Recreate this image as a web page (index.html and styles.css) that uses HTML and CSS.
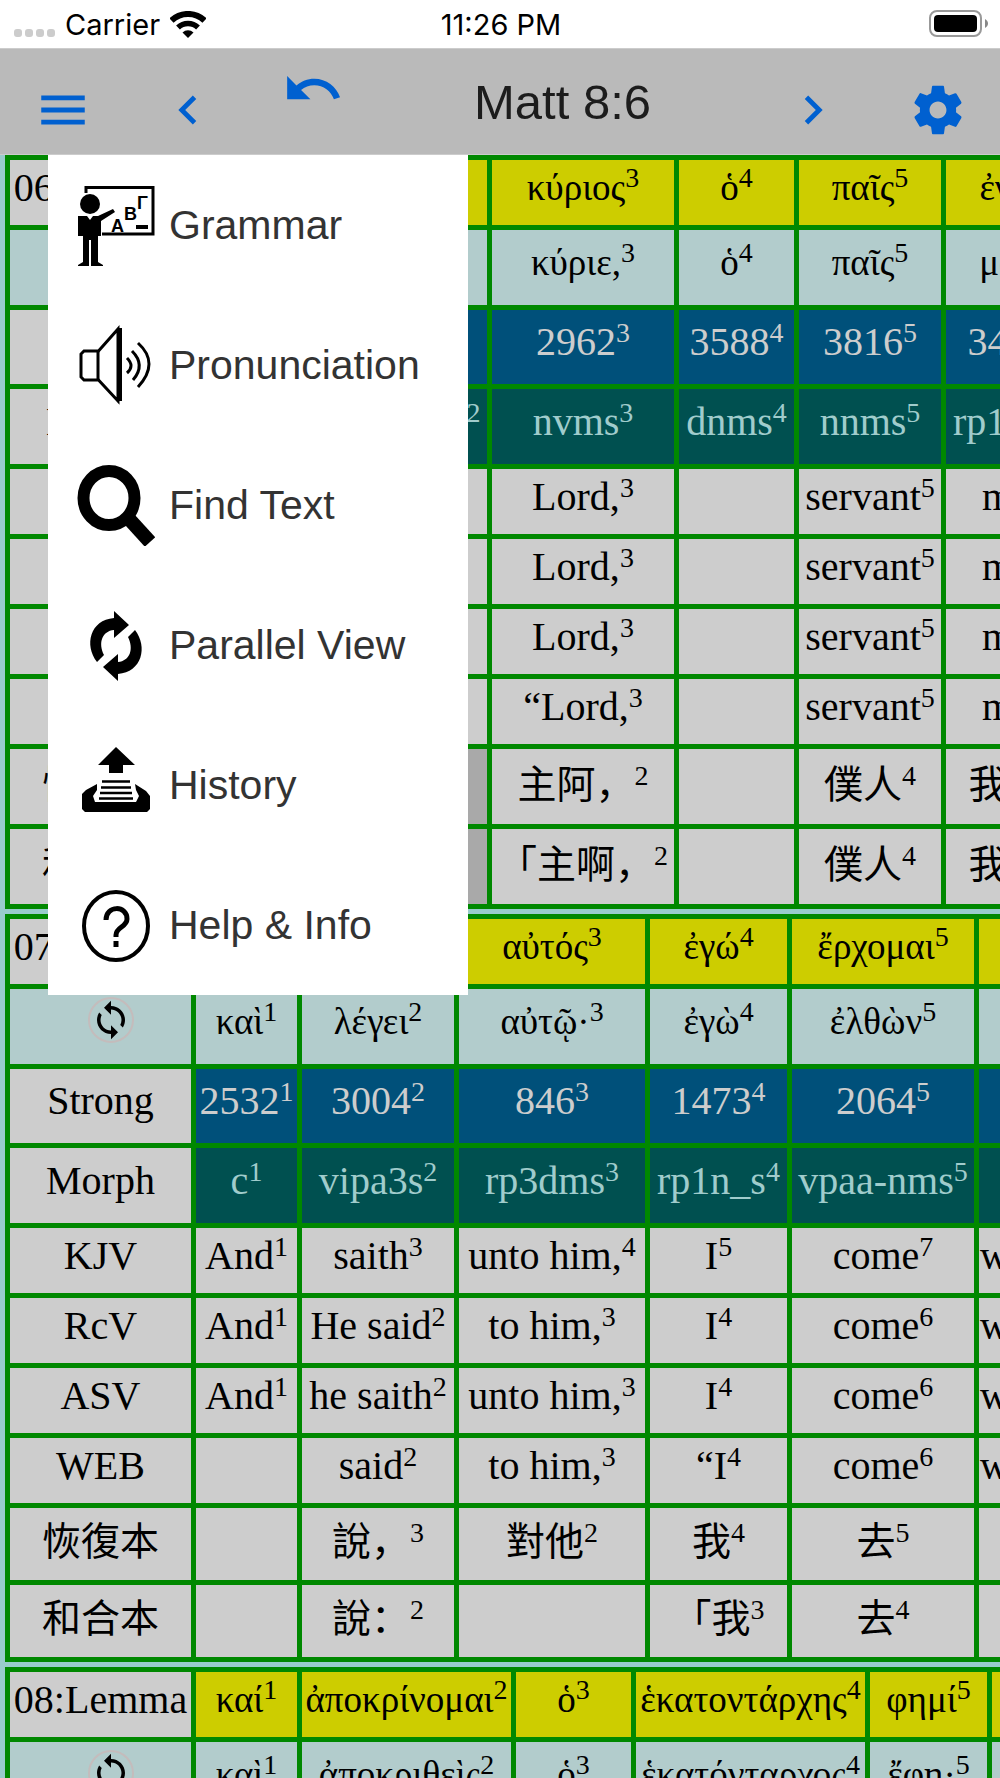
FILE: index.html
```html
<!DOCTYPE html>
<html lang="en">
<head>
    <meta charset="UTF-8">
    <meta name="viewport" content="width=device-width, initial-scale=1.0">
    <title>Matt 8:6</title>
    <link rel="stylesheet" href="styles.css">
</head>
<body>
    <div class="status">
        <div class="carrier">
            <span class="dots"><i></i><i></i><i></i><i></i></span>
            <span>Carrier</span>
            <svg class="wifi" viewBox="0 0 36 27">
                <path d="M1.500 9.500a24 24 0 0 1 33 0" fill="none" stroke="#000" stroke-width="6"/>
                <path d="M8 16.500a14.500 14.500 0 0 1 20 0" fill="none" stroke="#000" stroke-width="5.500"/>
                <path d="M12.500 21.500a8 8 0 0 1 11 0L18 27z"/>
            </svg>
        </div>
        <div class="time">11:26 PM</div>
        <svg class="battery" viewBox="0 0 60 28">
            <rect x="2" y="1" width="51" height="25" rx="7" fill="none" stroke="#999" stroke-width="2"/>
            <rect x="6" y="5" width="43" height="17" rx="4"/>
            <path d="M57 9c4 2 4 7 0 9z" fill="#888"/>
        </svg>
    </div>

    <header class="toolbar">
        <button aria-label="Menu">
            <svg viewBox="0 0 24 24"><path d="M3 18h18v-2H3v2zm0-5h18v-2H3v2zm0-7v2h18V6H3z"/></svg>
        </button>
        <button aria-label="Previous">
            <svg viewBox="0 0 24 24"><path d="M15.41 7.41L14 6l-6 6 6 6 1.41-1.41L10.83 12z"/></svg>
        </button>
        <button class="undo" aria-label="Undo">
            <svg viewBox="0 0 24 24"><path d="M12.5 8c-2.65 0-5.05.99-6.9 2.6L2 7v9h9l-3.62-3.62c1.39-1.16 3.16-1.88 5.12-1.88 3.54 0 6.55 2.31 7.6 5.5l2.37-.78C21.08 11.03 17.15 8 12.5 8z"/></svg>
        </button>
        <h1>Matt 8:6</h1>
        <button aria-label="Next">
            <svg viewBox="0 0 24 24"><path d="M10 6L8.59 7.41 13.17 12l-4.58 4.59L10 18l6-6z"/></svg>
        </button>
        <button aria-label="Settings">
            <svg viewBox="0 0 24 24"><path d="M19.43 12.98c.04-.32.07-.64.07-.98s-.03-.66-.07-.98l2.110-1.65c.19-.15.24-.42.12-.64l-2-3.46c-.12-.22-.39-.3-.61-.22l-2.490 1c-.52-.4-1.080-.73-1.690-.98l-.38-2.650C14.46 2.180 14.250 2 14 2h-4c-.25 0-.46.18-.49.42l-.38 2.650c-.61.25-1.170.59-1.690.98l-2.490-1c-.23-.09-.49 0-.61.22l-2 3.460c-.13.22-.07.49.12.64l2.110 1.650c-.04.32-.07.65-.07.98s.03.66.07.98l-2.110 1.650c-.19.15-.24.42-.12.64l2 3.460c.12.22.39.3.61.22l2.490-1c.52.4 1.080.73 1.690.98l.38 2.650c.03.24.24.42.49.42h4c.25 0 .46-.18.49-.42l.38-2.650c.61-.25 1.170-.59 1.690-.98l2.490 1c.23.09.49 0 .61-.22l2-3.460c.12-.22.07-.49-.12-.64l-2.110-1.650zM12 15.5c-1.930 0-3.500-1.570-3.500-3.500s1.570-3.500 3.500-3.500 3.500 1.570 3.500 3.500-1.570 3.500-3.500 3.500z"/></svg>
        </button>
    </header>

    <main class="content">
        <table class="verse verse-6">
            <colgroup><col><col><col><col><col><col><col></colgroup>
            <tr class="lemma"><th>06:Lemma</th><td>καί<sup>1</sup></td><td>λέγω<sup>2</sup></td><td>κύριος<sup>3</sup></td><td>ὁ<sup>4</sup></td><td>παῖς<sup>5</sup></td><td>ἐγώ<sup>6</sup></td></tr>
            <tr class="greek"><th></th><td>καὶ<sup>1</sup></td><td>λέγων,<sup>2</sup></td><td>κύριε,<sup>3</sup></td><td>ὁ<sup>4</sup></td><td>παῖς<sup>5</sup></td><td>μου<sup>6</sup></td></tr>
            <tr class="strong"><th>Strong</th><td>2532<sup>1</sup></td><td>3004<sup>2</sup></td><td>2962<sup>3</sup></td><td>3588<sup>4</sup></td><td>3816<sup>5</sup></td><td>3450<sup>6</sup></td></tr>
            <tr class="morph"><th>Morph</th><td>c<sup>1</sup></td><td>vppa-nms<sup>2</sup></td><td>nvms<sup>3</sup></td><td>dnms<sup>4</sup></td><td>nnms<sup>5</sup></td><td>rp1g_s<sup>6</sup></td></tr>
            <tr><th>KJV</th><td>And<sup>1</sup></td><td>saying,<sup>2</sup></td><td>Lord,<sup>3</sup></td><td></td><td>servant<sup>5</sup></td><td>my<sup>4</sup></td></tr>
            <tr><th>RcV</th><td>And<sup>1</sup></td><td>saying,<sup>2</sup></td><td>Lord,<sup>3</sup></td><td></td><td>servant<sup>5</sup></td><td>my<sup>4</sup></td></tr>
            <tr><th>ASV</th><td>and<sup>1</sup></td><td>saying,<sup>2</sup></td><td>Lord,<sup>3</sup></td><td></td><td>servant<sup>5</sup></td><td>my<sup>4</sup></td></tr>
            <tr><th>WEB</th><td>and<sup>1</sup></td><td>saying,<sup>2</sup></td><td>“Lord,<sup>3</sup></td><td></td><td>servant<sup>5</sup></td><td>my<sup>4</sup></td></tr>
            <tr class="cjk tall" lang="zh"><th>恢復本</th><td>說，<sup>1</sup></td><td class="none"></td><td>主阿，<sup>2</sup></td><td></td><td>僕人<sup>4</sup></td><td>我的<sup>3</sup></td></tr>
            <tr class="cjk tall" lang="zh"><th>和合本</th><td>說：<sup>1</sup></td><td class="none"></td><td>「主啊，<sup>2</sup></td><td></td><td>僕人<sup>4</sup></td><td>我的<sup>3</sup></td></tr>
        </table>

        <table class="verse verse-7">
            <colgroup><col><col><col><col><col><col><col></colgroup>
            <tr class="lemma"><th>07:Lemma</th><td>καί<sup>1</sup></td><td>λέγω<sup>2</sup></td><td>αὐτός<sup>3</sup></td><td>ἐγώ<sup>4</sup></td><td>ἔρχομαι<sup>5</sup></td><td>θεραπεύω<sup>6</sup></td></tr>
            <tr class="greek">
                <th>
                    <button class="sync" aria-label="Reload verse">
                        <svg viewBox="0 0 24 24"><path d="M12 4V1L8 5l4 4V6c3.310 0 6 2.690 6 6 0 1.010-.25 1.970-.7 2.800l1.460 1.460C19.540 15.030 20 13.570 20 12c0-4.420-3.580-8-8-8zm0 14c-3.310 0-6-2.690-6-6 0-1.010.25-1.970.7-2.800L5.240 7.740C4.460 8.970 4 10.430 4 12c0 4.420 3.580 8 8 8v3l4-4-4-4v3z"/></svg>
                    </button>
                </th>
                <td>καὶ<sup>1</sup></td><td>λέγει<sup>2</sup></td><td>αὐτῷ·<sup>3</sup></td><td>ἐγὼ<sup>4</sup></td><td>ἐλθὼν<sup>5</sup></td><td>θεραπεύσω<sup>6</sup></td>
            </tr>
            <tr class="strong"><th>Strong</th><td>2532<sup>1</sup></td><td>3004<sup>2</sup></td><td>846<sup>3</sup></td><td>1473<sup>4</sup></td><td>2064<sup>5</sup></td><td>2323<sup>6</sup></td></tr>
            <tr class="morph"><th>Morph</th><td>c<sup>1</sup></td><td>vipa3s<sup>2</sup></td><td>rp3dms<sup>3</sup></td><td>rp1n_s<sup>4</sup></td><td>vpaa-nms<sup>5</sup></td><td>vifa1s<sup>6</sup></td></tr>
            <tr><th>KJV</th><td>And<sup>1</sup></td><td>saith<sup>3</sup></td><td>unto him,<sup>4</sup></td><td>I<sup>5</sup></td><td>come<sup>7</sup></td><td>will heal him<sup>6</sup></td></tr>
            <tr><th>RcV</th><td>And<sup>1</sup></td><td>He said<sup>2</sup></td><td>to him,<sup>3</sup></td><td>I<sup>4</sup></td><td>come<sup>6</sup></td><td>will heal him<sup>5</sup></td></tr>
            <tr><th>ASV</th><td>And<sup>1</sup></td><td>he saith<sup>2</sup></td><td>unto him,<sup>3</sup></td><td>I<sup>4</sup></td><td>come<sup>6</sup></td><td>will heal him<sup>5</sup></td></tr>
            <tr><th>WEB</th><td></td><td>said<sup>2</sup></td><td>to him,<sup>3</sup></td><td>“I<sup>4</sup></td><td>come<sup>6</sup></td><td>will heal him<sup>5</sup></td></tr>
            <tr class="cjk" lang="zh"><th>恢復本</th><td></td><td>說，<sup>3</sup></td><td>對他<sup>2</sup></td><td>我<sup>4</sup></td><td>去<sup>5</sup></td><td>醫治<sup>6</sup></td></tr>
            <tr class="cjk" lang="zh"><th>和合本</th><td></td><td>說：<sup>2</sup></td><td></td><td>「我<sup>3</sup></td><td>去<sup>4</sup></td><td>醫治<sup>5</sup></td></tr>
        </table>

        <table class="verse verse-8">
            <colgroup><col><col><col><col><col><col><col></colgroup>
            <tr class="lemma"><th>08:Lemma</th><td>καί<sup>1</sup></td><td>ἀποκρίνομαι<sup>2</sup></td><td>ὁ<sup>3</sup></td><td>ἑκατοντάρχης<sup>4</sup></td><td>φημί<sup>5</sup></td><td></td></tr>
            <tr class="greek">
                <th>
                    <button class="sync" aria-label="Reload verse">
                        <svg viewBox="0 0 24 24"><path d="M12 4V1L8 5l4 4V6c3.310 0 6 2.690 6 6 0 1.010-.25 1.970-.7 2.800l1.460 1.460C19.540 15.030 20 13.570 20 12c0-4.420-3.580-8-8-8zm0 14c-3.310 0-6-2.690-6-6 0-1.010.25-1.970.7-2.800L5.240 7.740C4.460 8.970 4 10.430 4 12c0 4.420 3.580 8 8 8v3l4-4-4-4v3z"/></svg>
                    </button>
                </th>
                <td>καὶ<sup>1</sup></td><td>ἀποκριθεὶς<sup>2</sup></td><td>ὁ<sup>3</sup></td><td>ἑκατόνταρχος<sup>4</sup></td><td>ἔφη·<sup>5</sup></td><td></td>
            </tr>
        </table>

        <nav class="menu">
            <a href="#grammar">
                <svg viewBox="0 0 78 82">
                    <path d="M9 9V3.500h67V50H25" fill="none" stroke="#000" stroke-width="3"/>
                    <circle cx="13" cy="20" r="10"/>
                    <path d="M1 32h9l3 4 3-4h5l15-7 2 3-14 9v15h-3v26l5 3v1H14V56h-2v26H1v-1l5-3V52H1z"/>
                    <g font-family="Liberation Sans" font-weight="700" font-size="18">
                        <text x="34" y="48">A</text>
                        <text x="47" y="36">B</text>
                        <text x="60" y="25">Γ</text>
                    </g>
                    <path d="M59 43h12" stroke="#000" stroke-width="4"/>
                </svg>
                Grammar
            </a>
            <a href="#pronunciation">
                <svg viewBox="0 0 78 82" fill="none" stroke="#000" stroke-width="3">
                    <path d="M7 27h14.500L41 5v72L21.500 56H7l-3-3V30z"/>
                    <path d="M21 27v29M43.500 4v73"/>
                    <path d="M50 34q8 8 0 15M55 27q14 14 1 29M61 19q22 20 0 44"/>
                </svg>
                Pronunciation
            </a>
            <a href="#find">
                <svg viewBox="0 0 78 82" fill="none" stroke="#000">
                    <ellipse cx="32" cy="34" rx="25.500" ry="27" stroke-width="12"/>
                    <path d="M53 56l20 22" stroke-width="14"/>
                </svg>
                Find Text
            </a>
            <a href="#parallel">
                <svg viewBox="0 0 78 82">
                    <path id="turn" d="M20 58C7 41 13 16 37 14V7l15 14-15 13v-8C25 27 21 39 27 51z"/>
                    <use href="#turn" transform="rotate(180 39 42)"/>
                </svg>
                Parallel View
            </a>
            <a href="#history">
                <svg viewBox="0 0 78 82">
                    <path d="M39 3l19 18H46v8H32v-8H21z"/>
                    <path d="M25 37.500h28M24 43.500h30M23 49h32M22 54.500h34" stroke="#000" stroke-width="2.500"/>
                    <path d="M20 40v6l-4 6 2 6h41l3-6-3-6-1-6 11 7 4 5v13l-3 3H8l-3-3V50l4-4z"/>
                </svg>
                History
            </a>
            <a href="#help">
                <svg viewBox="0 0 78 82" fill="none" stroke="#000">
                    <ellipse cx="39" cy="42" rx="32" ry="34" stroke-width="4"/>
                    <path d="M29 36c0-15 21-15 21-1 0 8-11 8-11 16v2" stroke-width="5"/>
                    <path d="M39 57v6" stroke-width="5"/>
                </svg>
                Help &amp; Info
            </a>
        </nav>
    </main>
</body>
</html>
```
FILE: styles.css
```css
* {
    margin: 0;
    padding: 0;
    box-sizing: border-box;
}
body {
    display: flex;
    flex-direction: column;
    height: 100vh;
    overflow: hidden;
    background: #99cccc;
    font-family: "Liberation Sans", sans-serif;
}
button {
    border: 0;
    background: none;
    cursor: pointer;
}

/* status bar */
.status {
    display: grid;
    grid-template-columns: 1fr auto 1fr;
    align-items: center;
    height: 48px;
    flex-shrink: 0;
    padding: 0 12px 0 14px;
    background: #fff;
    font-family: Inter, sans-serif;
    font-size: 29px;
}
.carrier {
    display: flex;
    align-items: center;
    gap: 10px;
}
.dots {
    display: flex;
    gap: 3px;
    padding-top: 17px;
}
.dots i {
    width: 8px;
    height: 8px;
    border-radius: 3px;
    background: #ccc;
}
.wifi {
    width: 36px;
    height: 27px;
}
.battery {
    width: 60px;
    height: 28px;
    justify-self: end;
}

/* toolbar */
.toolbar {
    display: grid;
    grid-template-columns: 1fr 1fr 1fr 3fr 1fr 1fr;
    height: 107px;
    flex-shrink: 0;
    background: #bababa;
    border-top: 1px solid #ccc;
    border-bottom: 1px solid #ccc;
}
.toolbar button {
    display: flex;
    align-items: center;
    justify-content: center;
    padding-top: 14px;
}
.toolbar svg {
    width: 58px;
    height: 58px;
    fill: #0060d0;
}
.toolbar .undo {
    padding: 0 0 28px;
}
.toolbar .undo svg {
    width: 62px;
    height: 62px;
}
.toolbar h1 {
    font-size: 49px;
    font-weight: 400;
    line-height: 107px;
    text-align: center;
    color: #1c1c1c;
}

/* verses */
.content {
    position: relative;
    flex: 1;
    overflow: hidden;
    padding-left: 5px;
}
.verse {
    table-layout: fixed;
    width: 0;
    border-collapse: collapse;
    margin-bottom: 5px;
    font-family: "Liberation Serif", "Noto Sans CJK SC", serif;
    font-size: 40px;
    line-height: 46px;
    text-align: center;
    white-space: nowrap;
}
.verse th,
.verse td {
    height: 70px;
    padding-bottom: 10px;
    border: 5px solid #008800;
    background: #cdcdcd;
    font-weight: 400;
    overflow: hidden;
}
.verse sup {
    font-size: 28px;
    line-height: 0;
    vertical-align: 13px;
}
.verse col:nth-child(1) { width: 186px; }
.verse col:nth-child(2) { width: 106px; }

.verse-6 col:nth-child(3) { width: 190px; }
.verse-6 col:nth-child(4) { width: 187px; }
.verse-6 col:nth-child(5) { width: 120px; }
.verse-6 col:nth-child(6) { width: 147px; }
.verse-6 col:nth-child(7) { width: 142px; }

.verse-7 col:nth-child(3) { width: 157px; }
.verse-7 col:nth-child(4) { width: 191px; }
.verse-7 col:nth-child(5) { width: 142px; }
.verse-7 col:nth-child(6) { width: 187px; }
.verse-7 col:nth-child(7) { width: 232px; }

.verse-8 col:nth-child(3) { width: 214px; }
.verse-8 col:nth-child(4) { width: 120px; }
.verse-8 col:nth-child(5) { width: 234px; }
.verse-8 col:nth-child(6) { width: 122px; }
.verse-8 col:nth-child(7) { width: 120px; }

.verse .lemma td {
    background: #cdcd00;
    font-size: 37px;
}
.verse .greek th,
.verse .greek td {
    height: 80px;
    background: #b2cccc;
    font-size: 37px;
}
.verse .strong th,
.verse .strong td {
    height: 79px;
}
.verse .morph th,
.verse .morph td {
    height: 80px;
}
.verse .strong td {
    background: #00507a;
    color: #cdcdcd;
}
.verse .morph td {
    background: #005050;
    color: #a0cccc;
}
.verse .cjk th,
.verse .cjk td {
    height: 77px;
    padding-bottom: 4px;
    font-size: 39px;
}
.verse .tall th,
.verse .tall td {
    height: 80px;
}
.verse .none {
    background: #a9a9a9;
}
.verse .greek th {
    padding: 0 0 14px 20px;
}
.sync {
    display: block;
    width: 46px;
    height: 46px;
    margin: 0 auto;
    border: 2px solid #c4bcbc;
    border-radius: 50%;
}
.sync svg {
    display: block;
    width: 42px;
    height: 42px;
}

/* dropdown menu over the verses */
.menu {
    position: absolute;
    top: 0;
    left: 48px;
    width: 420px;
    background: #fff;
}
.menu a {
    display: flex;
    align-items: center;
    gap: 14px;
    height: 140px;
    padding-left: 29px;
    font-size: 41px;
    color: #333;
    text-decoration: none;
}
.menu svg {
    width: 78px;
    height: 82px;
    flex-shrink: 0;
}
```
